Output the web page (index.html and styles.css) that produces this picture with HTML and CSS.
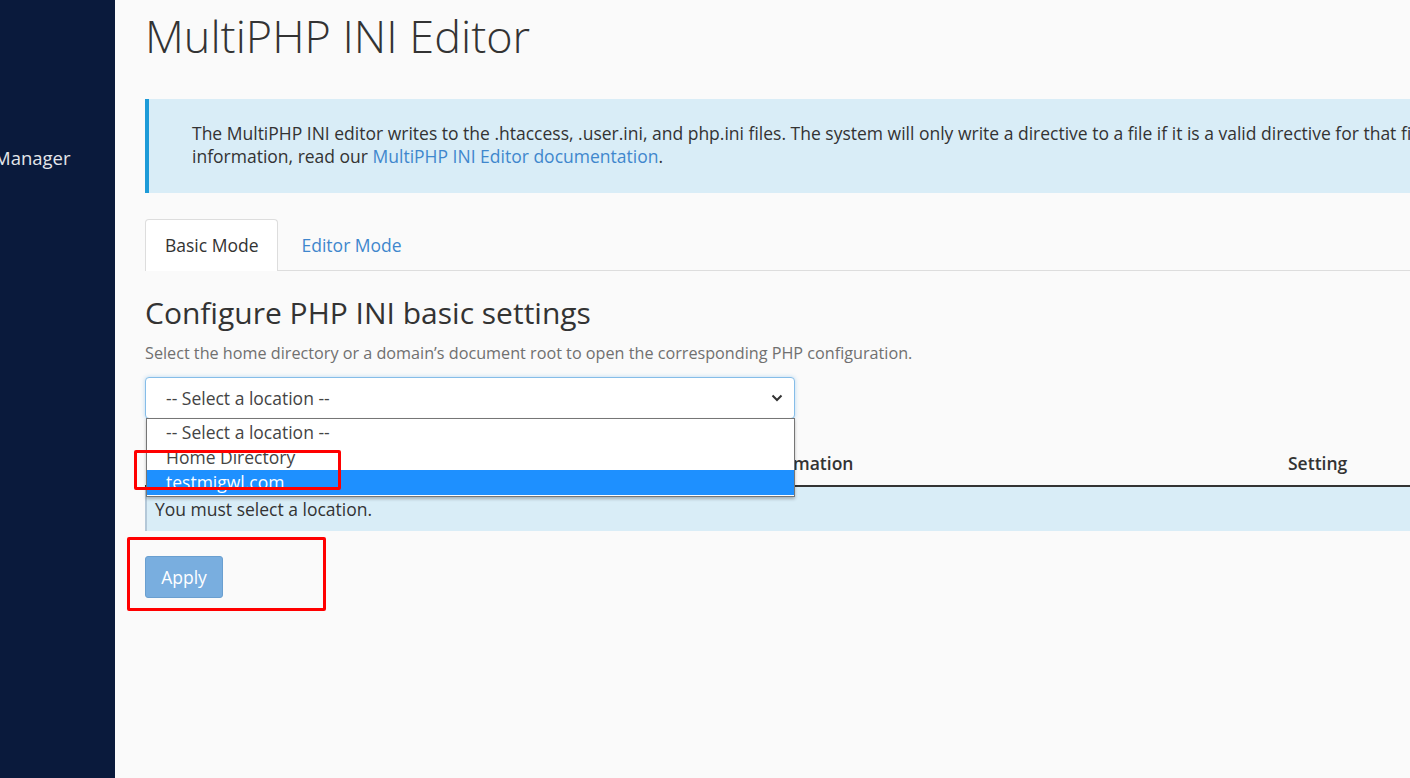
FILE: index.html
```html
<!DOCTYPE html>
<html lang="en">
<head>
<meta charset="utf-8">
<title>MultiPHP INI Editor</title>
<link rel="stylesheet" href="styles.css">
</head>
<body>
<aside class="sidebar">
  <div class="nav-item">Manager</div>
</aside>
<main class="content">
  <h1 class="page-title">MultiPHP INI Editor</h1>
  <div class="callout">
    <p>The MultiPHP INI editor writes to the .htaccess, .user.ini, and php.ini files. The system will only write a directive to a file if it is a valid directive for that file. For more<br>information, read our <a href="#">MultiPHP INI Editor documentation</a>.</p>
  </div>
  <ul class="tabs">
    <li class="tab active">Basic Mode</li>
    <li class="tab">Editor Mode</li>
  </ul>
  <h2 class="section-title">Configure PHP INI basic settings</h2>
  <p class="help">Select the home directory or a domain’s document root to open the corresponding PHP configuration.</p>
  <div class="select-wrap">
    <div class="select">
      <span>-- Select a location --</span>
      <svg class="chevron" width="12" height="8" viewBox="0 0 12 8"><path d="M1.5 1.5 6 6 10.5 1.5" fill="none" stroke="#333" stroke-width="2"/></svg>
    </div>
    <ul class="dropdown">
      <li class="opt">-- Select a location --</li>
      <li class="opt">Home Directory</li>
      <li class="opt selected">testmigwl.com</li>
    </ul>
  </div>
  <table class="settings">
    <thead>
      <tr><th class="c1">Directive</th><th class="c2">Information</th><th class="c3">Setting</th></tr>
    </thead>
    <tbody>
      <tr class="info-row"><td colspan="3">You must select a location.</td></tr>
    </tbody>
  </table>
  <div class="actions">
    <button class="btn" disabled>Apply</button>
  </div>
  <div class="mark mark-1"></div>
  <div class="mark mark-2"></div>
</main>
</body>
</html>
```
FILE: styles.css
```css
html, body {
  margin: 0;
  padding: 0;
}
body {
  display: flex;
  width: 1410px;
  height: 778px;
  overflow: hidden;
  background: #fafafa;
  font-family: "Open Sans", "Liberation Sans", sans-serif;
  color: #333;
}
.sidebar {
  width: 115px;
  flex: none;
  background: #0a1a3c;
  padding-top: 145px;
  box-sizing: border-box;
  overflow: hidden;
}
.nav-item {
  color: #e4e6ea;
  font-size: 18.5px;
  line-height: 26px;
  margin-left: -6px;
  white-space: nowrap;
}
.content {
  position: relative;
  flex: 1;
  min-width: 0;
  padding-left: 30px;
  overflow: hidden;
}
.page-title {
  margin: 12px 0 0;
  font-size: 45px;
  font-weight: 300;
  line-height: 48px;
  color: #333;
  white-space: nowrap;
}
.callout {
  margin-top: 39px;
  background: #d9edf7;
  border-left: 4px solid #1d9bd8;
  padding: 23px 0 25px 43px;
  width: 1400px;
  box-sizing: border-box;
}
.callout p {
  margin: 0;
  font-size: 17.5px;
  line-height: 23px;
  color: #333;
  white-space: nowrap;
}
.callout a {
  color: #3f87cd;
  text-decoration: none;
}
.tabs {
  list-style: none;
  margin: 26px 0 0;
  padding: 0;
  display: flex;
  gap: 4px;
  border-bottom: 1px solid #ddd;
}
.tab {
  padding: 0 18px 0 19px;
  height: 50px;
  line-height: 50px;
  font-size: 17.5px;
  color: #3f87cd;
  border: 1px solid transparent;
  border-bottom: none;
  margin-bottom: -1px;
}
.tab.active {
  background: #fff;
  color: #333;
  border-color: #ddd;
  border-radius: 4px 4px 0 0;
  height: 51px;
}
.section-title {
  margin: 24px 0 0;
  font-size: 30px;
  font-weight: 400;
  line-height: 36px;
  color: #333;
}
.help {
  margin: 12px 0 0;
  font-size: 16.2px;
  line-height: 20px;
  color: #707070;
}
.select-wrap {
  position: relative;
  margin-top: 14px;
  width: 650px;
}
.select {
  height: 42px;
  box-sizing: border-box;
  border: 1px solid #85bde8;
  border-radius: 4px;
  background: #fff;
  box-shadow: 0 0 4px rgba(102, 175, 233, 0.45);
  display: flex;
  align-items: center;
  justify-content: space-between;
  padding: 0 11px 0 20px;
  font-size: 17.5px;
  color: #444;
}
.dropdown {
  position: absolute;
  left: 1px;
  top: 41px;
  width: 649px;
  box-sizing: border-box;
  margin: 0;
  padding: 1px 0 1px;
  list-style: none;
  background: #fff;
  border: 1px solid #767676;
  box-shadow: 0 2px 3px rgba(0, 0, 0, 0.25);
  z-index: 5;
}
.opt {
  font-size: 17.5px;
  line-height: 25px;
  height: 25px;
  padding-left: 19px;
  color: #444;
  overflow: hidden;
}
.opt.selected {
  background: #1e90ff;
  color: #fff;
}
.settings {
  width: 1400px;
  margin-top: 21px;
  border-collapse: collapse;
  table-layout: fixed;
}
.settings th {
  text-align: left;
  font-size: 17.5px;
  font-weight: 600;
  line-height: 24px;
  padding: 11px 10px 10px;
  border-bottom: 2px solid #333;
  color: #333;
}
.settings .c1 { width: 576px; }
.settings .c2 { width: 516px; }
.info-row td {
  background: #d9edf7;
  border-left: 2px solid #b4c8d8;
  padding: 10px 8px 9px 8px;
  font-size: 17.5px;
  line-height: 25px;
  color: #333;
}
.actions {
  margin-top: 25px;
}
.btn {
  width: 78px;
  height: 42px;
  background: #79aedf;
  border: 1px solid #6a9fd0;
  border-radius: 3px;
  color: #fff;
  font-family: inherit;
  font-size: 17.5px;
  padding: 0;
  cursor: not-allowed;
}
.mark {
  position: absolute;
  border: 3px solid #ff0000;
  border-radius: 2px;
  box-sizing: border-box;
  z-index: 10;
}
.mark-1 {
  left: 19px;
  top: 450px;
  width: 207px;
  height: 40px;
}
.mark-2 {
  left: 12px;
  top: 537px;
  width: 199px;
  height: 74px;
}
```
